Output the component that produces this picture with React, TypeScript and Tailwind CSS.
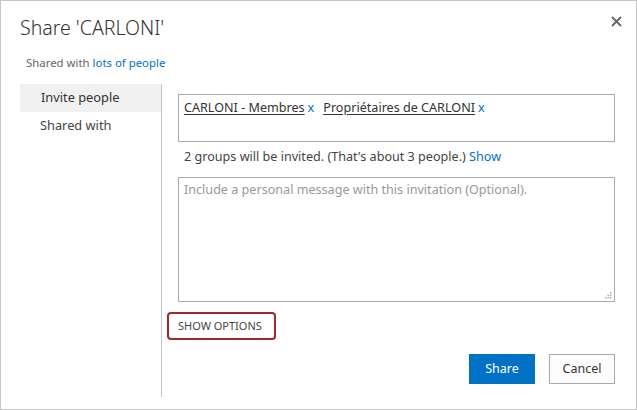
import { useState } from "react";

function CloseIcon() {
  return (
    <svg width="11" height="11" viewBox="0 0 11 11" className="block">
      <path d="M1 1 L10 10 M10 1 L1 10" stroke="#666" strokeWidth="1.8" />
    </svg>
  );
}

function ResizeGrip() {
  return (
    <svg width="7" height="7" viewBox="0 0 7 7" className="absolute right-[2px] bottom-[2px]">
      <rect x="5" y="0" width="1.5" height="1.5" fill="#aaa" />
      <rect x="2.5" y="2.5" width="1.5" height="1.5" fill="#aaa" />
      <rect x="5" y="2.5" width="1.5" height="1.5" fill="#aaa" />
      <rect x="0" y="5" width="1.5" height="1.5" fill="#aaa" />
      <rect x="2.5" y="5" width="1.5" height="1.5" fill="#aaa" />
      <rect x="5" y="5" width="1.5" height="1.5" fill="#aaa" />
    </svg>
  );
}

const groups = ["CARLONI - Membres", "Propriétaires de CARLONI"];

export default function App() {
  const [tab, setTab] = useState("invite");

  return (
    <div
      className="w-[637px] h-[410px] bg-white border border-[#c6c6c6] text-[#444] overflow-hidden"
      style={{ fontFamily: '"Noto Sans", "Open Sans", Arial, sans-serif' }}
    >
      <div className="flex items-start justify-between pl-[19px] pr-[14px] pt-[13px]">
        <h1 className="text-[19.5px] leading-[28px] font-light text-[#333]">Share 'CARLONI'</h1>
        <button className="mt-[2px] p-0">
          <CloseIcon />
        </button>
      </div>

      <div className="pl-[25px] mt-[13px] text-[11.4px] leading-[16px] text-[#666]">
        Shared with <a className="text-[#0072c6]">lots of people</a>
      </div>

      <div className="flex mt-[13px] ml-[19px]">
        <nav className="w-[142px] h-[313px] border-r border-[#c6c6c6] text-[12.8px]">
          <button
            onClick={() => setTab("invite")}
            className={`block w-full h-[28px] text-left pl-[21px] ${tab === "invite" ? "bg-[#f1f1f1] text-[#333]" : ""}`}
          >
            Invite people
          </button>
          <button
            onClick={() => setTab("shared")}
            className={`block w-full h-[28px] text-left pl-[20px] ${tab === "shared" ? "bg-[#f1f1f1] text-[#333]" : ""}`}
          >
            Shared with
          </button>
        </nav>

        <div className="pl-[16px] pt-[10px] w-[454px] text-[12.6px]">
          <div className="w-[437px] h-[48px] border border-[#ababab] px-[5px] pt-[4px] leading-[18px] text-[#333]">
            {groups.map((g, i) => (
              <span key={g} className={i > 0 ? "ml-[9px]" : ""}>
                <span className="underline underline-offset-2">{g}</span>
                <span className="text-[#0072c6] ml-[3px]">x</span>
              </span>
            ))}
          </div>

          <div className="mt-[6px] pl-[6px] leading-[18px]">
            2 groups will be invited. (That's about 3 people.) <a className="text-[#0072c6]">Show</a>
          </div>

          <div className="relative mt-[11px] w-[437px] h-[125px] border border-[#ababab] px-[5px] pt-[3px] leading-[18px] text-[#999]">
            Include a personal message with this invitation (Optional).
            <ResizeGrip />
          </div>

          <button className="mt-[10px] -ml-[11px] w-[109px] h-[28px] border-2 border-[#a4262c] rounded-[4px] text-left pl-[9px] text-[11px] leading-[16px] text-[#444]">
            SHOW OPTIONS
          </button>

          <div className="flex justify-end gap-[14px] mt-[14px] w-[437px]">
            <button className="w-[66px] h-[30px] bg-[#0072c6] text-white text-[12.5px]">Share</button>
            <button className="w-[66px] h-[30px] bg-[#fdfdfd] border border-[#ababab] text-[#333] text-[12.5px]">Cancel</button>
          </div>
        </div>
      </div>
    </div>
  );
}
